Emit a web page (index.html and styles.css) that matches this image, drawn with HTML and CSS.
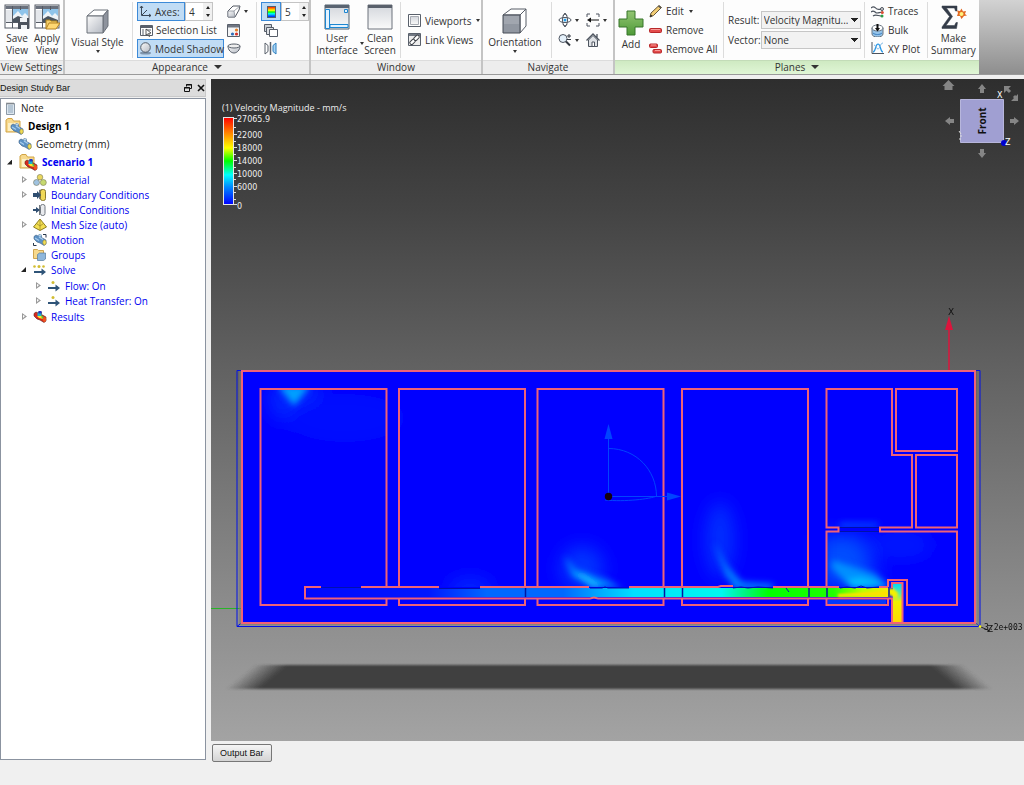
FILE: index.html
```html
<!DOCTYPE html>
<html lang="en">
<head>
<meta charset="utf-8">
<title>Design Study</title>
<link rel="stylesheet" href="styles.css">
</head>
<body>
<svg class="defs" width="0" height="0" aria-hidden="true">
  <defs>
    <linearGradient id="face" x1="0" y1="0" x2="1" y2="1"><stop offset="0" stop-color="#fafafa"/><stop offset="1" stop-color="#b4b9c2"/></linearGradient>
    <linearGradient id="pane" x1="0" y1="0" x2="0" y2="1"><stop offset="0" stop-color="#d3d6dc"/><stop offset="1" stop-color="#fafafa"/></linearGradient>
    <linearGradient id="green" x1="0" y1="0" x2="0" y2="1"><stop offset="0" stop-color="#93c573"/><stop offset="1" stop-color="#4e9a37"/></linearGradient>
    <linearGradient id="rainbow" x1="0" y1="0" x2="0" y2="1"><stop offset="0" stop-color="#f00"/><stop offset=".12" stop-color="#ff5a00"/><stop offset=".35" stop-color="#ff0"/><stop offset=".5" stop-color="#0f0"/><stop offset=".66" stop-color="#0ff"/><stop offset=".8" stop-color="#08f"/><stop offset="1" stop-color="#00f"/></linearGradient>
    <symbol id="i-view" viewBox="0 0 26 26"><rect x="1" y="1" width="24" height="23" fill="#fff" stroke="#555b65"/><path d="M1.500 2h23v3h-23z" fill="#6a717d"/><path d="M9 5h15v11H9z" fill="#8fc4ea"/><path d="M9 12l5-5 4 5 3-3 3 3v6H9z" fill="#eef3f7"/><path d="M9 15l5-3 10 4v3H9z" fill="#49545f"/><path d="M8.500 2v22M16.500 2v4M2 18.500h22" stroke="#555b65" fill="none"/><path d="M2 6h6v12H2z" fill="#e4e7eb"/></symbol>
    <symbol id="i-folder" viewBox="0 0 19 17"><path d="M1 14V2l2-1.500h4L8.500 3H15v11z" fill="#f7d98d" stroke="#d2a445"/><path d="M3 5h11v8H3z" fill="#fdf0c4"/></symbol>
    <symbol id="i-geo" viewBox="0 0 14 12"><path d="M1 5V2.500l2-1.500 2 1 1-1.500 2.500.5v2.500L13 6v4l-2 1.500-4-2.500-3-1z" fill="#5b91c4" stroke="#3f6288" stroke-width=".6"/><path d="M2 4l4 2.500M6 3l4 2.500" stroke="#a9cdec" stroke-width="1.300"/><ellipse cx="11.500" cy="8.500" rx="1.700" ry="2.400" fill="#f0dc57" stroke="#98852e" stroke-width=".5"/><ellipse cx="7" cy="1.500" rx="1.600" ry="1" fill="#b7d4ea"/></symbol>
    <symbol id="i-hot" viewBox="0 0 14 12"><path d="M1 5V2.500l2-1.500 2 1 1-1.500 2.500.5v2.500L13 6v4l-2 1.500-4-2.500-3-1z" fill="#d8281e" stroke="#5a221d" stroke-width=".6"/><path d="M4.500 1.500h4v3.500h-4z" fill="#19b4d0"/><path d="M5.500 0h3v2.500h-3z" fill="#2138c8"/><path d="M4 5h5l1 3-4-1z" fill="#ffe12b"/><path d="M8 4l3 2-2 2z" fill="#58c837"/><ellipse cx="11.500" cy="8.500" rx="1.700" ry="2.400" fill="#f0561f"/></symbol>
    <symbol id="i-step" viewBox="0 0 14 12"><path d="M1 8h9" stroke="#2f5478" stroke-width="2"/><path d="M8.500 4.500L13 8l-4.500 3.500z" fill="#2f5478"/><circle cx="6" cy="2.500" r="1.500" fill="#d2bd31"/></symbol>
  </defs>
</svg>

<header class="ribbon">
  <section class="panel panel-views">
    <div class="tools">
      <button class="big"><svg width="26" height="26"><use href="#i-view"/><path d="M14 14h11v11H14z" fill="#4c525c"/><path d="M16 14h7v4h-7zM17 21h6v4h-6z" fill="#f1f3f5"/></svg>Save<br>View</button>
      <button class="big"><svg width="26" height="26"><use href="#i-view"/><path d="M12 25V16h4l1 1h6v3" fill="#f3ce69" stroke="#a97d1d"/><path d="M12 25l3-6h11l-4 6z" fill="#ffd873" stroke="#b58222"/></svg>Apply<br>View</button>
    </div>
    <h2 class="caption">View Settings</h2>
  </section>

  <section class="panel panel-look">
    <div class="tools">
      <button class="big style-button"><svg width="26" height="26" viewBox="0 0 26 26"><path d="M2 8l7-6h14l-5 6z" fill="#fff" stroke="#6a7079"/><path d="M18 8l5-6v16l-5 7z" fill="#8e939d" stroke="#6a7079"/><path d="M2 8h16v17H2z" fill="url(#face)" stroke="#6a7079"/></svg>Visual Style<i class="caret"></i></button>
      <div class="stack ruled display">
        <div class="row"><button class="small toggle axes"><svg width="13" height="13" viewBox="0 0 13 13" fill="none" stroke="#3c4856"><path d="M2.500 1v9.500H12M3 10l5-5M1 3l1.500-2L4 3M10 9l2 1.500L10 12"/></svg>Axes:</button><span class="spin"><input value="4" aria-label="Axes size"><span><button aria-label="More"><i class="up"></i></button><button aria-label="Less"><i class="down"></i></button></span></span></div>
        <button class="small"><svg width="13" height="13" viewBox="0 0 13 13"><path d="M.5 1.500h12v10H.5z" fill="#fff" stroke="#59606b"/><path d="M1 2h11v2H1z" fill="#59606b"/><path d="M2 6h2M2 8h2M2 10h2M6 6h5" stroke="#59606b"/><path d="M6 5l5 4-2.500.5L10 12l-1 .5L7.500 10 6 11z" fill="#fff" stroke="#333" stroke-width=".8"/></svg>Selection List</button>
        <button class="small toggle"><svg width="13" height="13" viewBox="0 0 13 13"><ellipse cx="6.500" cy="11" rx="5.500" ry="1.500" fill="#7e95ad"/><circle cx="6.500" cy="5.500" r="4.800" fill="url(#face)" stroke="#515c69"/></svg>Model Shadow</button>
      </div>
      <div class="stack icons">
        <button class="small" aria-label="Clip"><svg width="14" height="13" viewBox="0 0 14 13"><path d="M1 6l5-5h7l-1 4-4 7H1z" fill="#fff" stroke="#515761"/><path d="M1 6h6l1 6H1z" fill="url(#face)" stroke="#7c828c" stroke-width=".7"/><path d="M7 6l6-5" fill="none" stroke="#7c828c" stroke-width=".7"/></svg><i class="caret"></i></button>
        <button class="small" aria-label="Materials"><svg width="14" height="13" viewBox="0 0 14 13"><path d="M.5.500h12v12H.5z" fill="#f4f5f6" stroke="#59606b"/><path d="M1 1h11v2.500H1z" fill="#707682"/><circle cx="9.500" cy="6" r="1.600" fill="#e57d24"/><circle cx="9.500" cy="10" r="1.600" fill="#d8322a"/><circle cx="5.500" cy="10" r="1.600" fill="#2e6eb8"/></svg></button>
        <button class="small" aria-label="Surface"><svg width="14" height="13" viewBox="0 0 14 13"><path d="M1 4c0 4 3 7 6 7s6-3 6-7z" fill="url(#face)" stroke="#59606b"/><ellipse cx="7" cy="4" rx="6" ry="2" fill="#eee" stroke="#59606b"/></svg></button>
      </div>
      <div class="stack ruled colours">
        <div class="row"><button class="toggle icon-only" aria-label="Colour legend"><svg width="9" height="12"><rect x=".5" y=".5" width="8" height="11" fill="url(#rainbow)" stroke="#506070"/></svg></button><span class="spin"><input value="5" aria-label="Legend levels"><span><button aria-label="More"><i class="up"></i></button><button aria-label="Less"><i class="down"></i></button></span></span></div>
        <button class="small" aria-label="Layers"><svg width="14" height="13" viewBox="0 0 14 13" stroke="#565d68"><path d="M.5.500h7v7h-7z" fill="#cbd0d6"/><path d="M2.500 3.500h7v7h-7z" fill="#dfe2e6"/><path d="M5.500 5.500h8v7h-8z" fill="#fff"/></svg></button>
        <button class="small" aria-label="Mirror"><svg width="14" height="13" viewBox="0 0 14 13"><path d="M1 1l3 2.500v6L1 12z" fill="#fff" stroke="#59606b"/><path d="M6.500 0v13" stroke="#59606b" stroke-width="1.500"/><path d="M12 1L9 3.500v6l3 2.500z" fill="#a8d4f5" stroke="#2e80c0"/></svg></button>
      </div>
    </div>
    <h2 class="caption">Appearance <i class="caret wide"></i></h2>
  </section>

  <section class="panel panel-window">
    <div class="tools">
      <button class="big ui-button"><svg width="26" height="26" viewBox="0 0 26 26"><path d="M1 1h24v24H1z" fill="url(#pane)" stroke="#51606e"/><path d="M1 1h24v3H1z" fill="#5a6471"/><path d="M1.500 5.500h4v19h-4zM6 20.500h18v3H6zM20.500 5.500h3v3h-3z" fill="#e3f3ff" stroke="#1c86d1"/></svg>User<br>Interface</button>
      <i class="caret side"></i>
      <button class="big clean-button"><svg width="26" height="26" viewBox="0 0 26 26"><path d="M1 1h24v24H1z" fill="url(#pane)" stroke="#6c727c"/><path d="M1 1h24v3H1z" fill="#59606b"/></svg>Clean<br>Screen</button>
      <div class="stack ruled pair">
        <button class="small"><svg width="13" height="13" viewBox="0 0 13 13"><path d="M.5.500h12v12H.5z" fill="#fff" stroke="#59606b"/><path d="M2.500 2.500h8v8h-8z" fill="url(#pane)" stroke="#a7abb2"/></svg>Viewports<i class="caret"></i></button>
        <button class="small"><svg width="13" height="13" viewBox="0 0 13 13"><path d="M.5.500h12v12H.5z" fill="#eee" stroke="#59606b"/><path d="M1 1h11v2H1z" fill="#727984"/><g fill="#fff" stroke="#3d4148"><rect x="-2.500" y="-1.500" width="6" height="3.500" rx="1.500" transform="translate(4 9) rotate(-45)"/><rect x="-2.500" y="-1.500" width="6" height="3.500" rx="1.500" transform="translate(8 5) rotate(-45)"/></g></svg>Link Views</button>
      </div>
    </div>
    <h2 class="caption">Window</h2>
  </section>

  <section class="panel panel-navigate">
    <div class="tools">
      <button class="big orient-button"><svg width="26" height="26" viewBox="0 0 26 26"><path d="M1 7l8-6h15l-6 6zM18 7l6-6v17l-6 7z" fill="#fff" stroke="#575d67"/><path d="M1 7h17v18H1z" fill="#9197a1" stroke="#474d56"/><path d="M2 8h15v8H2z" fill="#b2b6be" opacity=".5"/></svg>Orientation<i class="caret"></i></button>
      <div class="nav-grid ruled">
        <button class="small" aria-label="Orbit"><svg width="14" height="14" viewBox="0 0 14 14" fill="none" stroke="#4e5560"><ellipse cx="7" cy="7" rx="6" ry="2.500"/><ellipse cx="7" cy="7" rx="2.500" ry="6"/><path d="M5 3l2-3 2 3M5 11l2 3 2-3"/><circle cx="7" cy="7" r="1.500" fill="#269ce8" stroke="none"/></svg><i class="caret"></i></button>
        <button class="small" aria-label="Fit"><svg width="14" height="14" viewBox="0 0 14 14" fill="none" stroke="#4e5560"><path d="M1 4V1h3M10 1h3v3M13 10v3h-3M4 13H1v-3"/><path d="M3 7h10" stroke="#111"/><path d="M5 4.500L1 7l4 2.500z" fill="#111" stroke="none"/></svg><i class="caret"></i></button>
        <button class="small" aria-label="Zoom"><svg width="14" height="14" viewBox="0 0 14 14"><circle cx="5" cy="5.500" r="4" fill="#e5f1fb" stroke="#4e5560"/><path d="M8 8.500l4 4" stroke="#333942" stroke-width="2"/><path d="M9 3h4M11 1v4M9 6.500h4" stroke="#333942"/></svg><i class="caret"></i></button>
        <button class="small" aria-label="Home"><svg width="14" height="14" viewBox="0 0 14 14"><path d="M2.500 7v6.500h9V7L7 2.500z" fill="#dfe2e6" stroke="#4e5560"/><path d="M.5 7.500L7 1l6.500 6.500M11 1v4" fill="none" stroke="#4e5560" stroke-width="1.300"/><path d="M6 9h2.500v4.500H6z" fill="#fff" stroke="#4e5560"/></svg></button>
      </div>
    </div>
    <h2 class="caption">Navigate</h2>
  </section>

  <section class="panel panel-planes">
    <div class="tools">
      <button class="big add-button"><svg width="26" height="26" viewBox="0 0 26 26"><path d="M9 1h8v8h8v8h-8v8H9v-8H1V9h8z" fill="url(#green)" stroke="#36752b"/></svg>Add</button>
      <div class="stack edits">
        <button class="small"><svg width="13" height="13" viewBox="0 0 13 13"><path d="M1 12l1-4 8-7.500 2.500 2L4.500 10.500z" fill="#f3cd74" stroke="#65563a"/><path d="M1 12l.7-2.500L3.500 11z" fill="#222"/><path d="M9 1.500L10 .5l2.500 2-1 1z" fill="#555"/></svg>Edit<i class="caret"></i></button>
        <button class="small"><svg width="13" height="13" viewBox="0 0 13 13"><rect x=".5" y="4.500" width="12" height="4" rx="1" fill="#e34b4b" stroke="#b72729"/><path d="M2 5.500h9" stroke="#f79c98"/></svg>Remove</button>
        <button class="small"><svg width="13" height="13" viewBox="0 0 13 13"><g fill="#e34b4b" stroke="#b72729"><rect x=".5" y="2" width="8" height="3.500" rx="1"/><rect x="4" y="7.500" width="8.500" height="3.500" rx="1"/></g><path d="M2 3h5M6 8.500h5" stroke="#f79c98"/></svg>Remove All</button>
      </div>
      <div class="fields ruled">
        <label for="result">Result:</label><select id="result"><option>Velocity Magnitu...</option></select>
        <label for="vector">Vector:</label><select id="vector"><option>None</option></select>
      </div>
      <div class="stack ruled traces">
        <button class="small"><svg width="13" height="13" viewBox="0 0 13 13" fill="none" stroke="#4b525d"><path d="M0 3c3-3 4 0 6 1s3 0 5 0M0 7c3-3 4 1 6 1s3-1 6-1M2 11c3-2 5 0 8 0" stroke-width="1.200"/><circle cx="11" cy="4" r="1.500" fill="#ddd"/><circle cx="11.300" cy="7.500" r="1.500" fill="#db4c32" stroke="none"/><circle cx="11" cy="11" r="1.500" fill="#2e9b48" stroke="none"/></svg>Traces</button>
        <button class="small"><svg width="13" height="13" viewBox="0 0 13 13"><path d="M1 4v6c0 4 11 4 11 0V4z" fill="#95c4ea" stroke="#687480"/><ellipse cx="6.500" cy="4" rx="5.500" ry="3" fill="#fff" stroke="#687480"/><path d="M5.500 0h2v4H9L6.500 7.500 4 4h1.500z" fill="#111"/><path d="M2 9c2 2 7 2 9 0" stroke="#3b7ec0" fill="none"/></svg>Bulk</button>
        <button class="small"><svg width="13" height="13" viewBox="0 0 13 13" fill="none"><path d="M1 0v11.500H13" stroke="#4b525d"/><path d="M2 10c3 0 2-8 5-8s2 8 5 8" stroke="#2595e6" stroke-width="1.200"/><path d="M3 3c2 0 2 4 4 4s2-6 5-6" stroke="#7fb9e6"/></svg>XY Plot</button>
      </div>
      <button class="big ruled sum-button"><svg width="26" height="26" viewBox="0 0 26 26"><path d="M1 2h15v5h-1.500l-1-3H5.500l6 8.500L5 21.500h8.500l1.500-3h1.500l-1 6H1V23l7.500-10.500L1 3.500z" fill="#343c49" stroke="#343c49" stroke-width=".5"/><path d="M20.500 4.500l1.500 3 3-.5-1 3 2 1.500-3 .5-2.500 3-1.500-3-3 0 1-3-1-2.500 3 .5z" fill="#e26a23"/><circle cx="20.500" cy="10" r="2" fill="#fff27d"/></svg>Make<br>Summary</button>
    </div>
    <h2 class="caption">Planes <i class="caret wide"></i></h2>
  </section>
  <div class="ribbon-rest"></div>
</header>

<main class="workspace">
  <aside class="study">
    <div class="study-head"><h1>Design Study Bar</h1>
      <button aria-label="Float"><svg width="8" height="8" viewBox="0 0 8 8" fill="none" stroke="#111"><path d="M2.500 2.500v-2h5v4h-2M2 1h6" /><path d="M.5 3.500h5v4h-5zM0 4h6"/></svg></button>
      <button aria-label="Close"><svg width="8" height="8" viewBox="0 0 8 8"><path d="M1 1l6 6M7 1L1 7" stroke="#111" stroke-width="1.600"/></svg></button>
    </div>
    <ul class="tree">
      <li class="tall note"><svg width="12" height="13" viewBox="0 0 12 13"><path d="M1.500 1.500h8v11h-8z" fill="#dce6ef" stroke="#8c99a6"/><path d="M3 4h5M3 6h5M3 8h5M3 10h5" stroke="#8fa6ba"/><path d="M2 .5v2M4 .5v2M6 .5v2M8 .5v2" stroke="#777"/></svg>Note</li>
      <li class="tall top"><svg width="19" height="17"><use href="#i-folder"/><use href="#i-geo" x="5" y="5" width="14" height="12"/></svg><b>Design 1</b></li>
      <li class="tall geometry"><svg width="14" height="12"><use href="#i-geo"/></svg>Geometry (mm)</li>
      <li class="tall scenario"><i class="open"></i><svg width="19" height="17"><use href="#i-folder"/><use href="#i-hot" x="5" y="5" width="14" height="12"/></svg><a href="#scenario"><b>Scenario 1</b></a></li>
      <li class="branch">
        <ul id="scenario">
          <li><i class="shut"></i><svg width="14" height="12" viewBox="0 0 14 12" stroke="#7a7a5a" stroke-width=".6"><circle cx="7" cy="3.200" r="2.800" fill="#e9d75e"/><circle cx="3.500" cy="8.500" r="3" fill="#9fc2e0"/><circle cx="10.300" cy="8.500" r="3" fill="#c6d96f"/></svg><a href="#material">Material</a></li>
          <li><i class="shut"></i><svg width="14" height="12" viewBox="0 0 14 12"><path d="M6 1l4-1v11l-4-1z" fill="#6f757c"/><rect x="7.500" y=".5" width="5" height="11" rx="2" fill="#f0d957" stroke="#8b7a2d"/><path d="M0 4h4V2l4 4-4 4V8H0z" fill="#2f4e70"/></svg><a href="#boundary">Boundary Conditions</a></li>
          <li><i></i><svg width="14" height="12" viewBox="0 0 14 12"><rect x="7.500" y=".5" width="4.500" height="11" rx="2" fill="#e9ebee" stroke="#737980"/><path d="M6.500 1v10" stroke="#737980"/><path d="M0 5h3V3l4 3-4 3V7H0z" fill="#2f4e70"/></svg><a href="#initial">Initial Conditions</a></li>
          <li><i class="shut"></i><svg width="14" height="12" viewBox="0 0 14 12"><path d="M7 0l6.500 8L7 11.500.5 8z" fill="#f3df51" stroke="#8b7b22"/><path d="M7 0v11M3.500 4.500L7 7l3.500-2.500" stroke="#a18d2a" fill="none" stroke-width=".8"/></svg><a href="#mesh">Mesh Size (auto)</a></li>
          <li><i></i><svg width="14" height="12"><use href="#i-geo"/><path d="M10 .5h3v3M.5 9v2.500h3" stroke="#26374a" fill="none"/></svg><a href="#motion">Motion</a></li>
          <li><i></i><svg width="14" height="12" viewBox="0 0 14 12"><path d="M.5 9.500v-9h4l1 1h5v8z" fill="#f7d98d" stroke="#cfa550"/><path d="M4.500 5.500l2-1.500h6v6l-2 1.500h-6z" fill="#8fb7db" stroke="#557c9f" stroke-width=".7"/></svg><a href="#groups">Groups</a></li>
          <li><i class="open"></i><svg width="14" height="12"><use href="#i-step"/><circle cx="1.500" cy="2.500" r="1.300" fill="#d2bd31"/><circle cx="10.500" cy="2.500" r="1.300" fill="#d2bd31"/></svg><a href="#solve">Solve</a></li>
          <li class="branch">
            <ul id="solve">
              <li><i class="shut"></i><svg width="14" height="12"><use href="#i-step"/></svg><a href="#flow">Flow: On</a></li>
              <li><i class="shut"></i><svg width="14" height="12"><use href="#i-step"/></svg><a href="#heat">Heat Transfer: On</a></li>
            </ul>
          </li>
          <li><i class="shut"></i><svg width="14" height="12"><use href="#i-hot"/></svg><a href="#results">Results</a></li>
        </ul>
      </li>
    </ul>
  </aside>

  <section class="view">
    <div class="stage">
      <svg class="scene" viewBox="211 79 813 662" preserveAspectRatio="xMinYMin meet" role="img" aria-label="Velocity plot of the floor plan">
        <defs>
          <linearGradient id="flow" gradientUnits="userSpaceOnUse" x1="305" y1="0" x2="892" y2="0">
            <stop offset="0" stop-color="#0008ff"/><stop offset=".21" stop-color="#0018ff"/><stop offset=".31" stop-color="#0068ff"/><stop offset=".44" stop-color="#0068ff"/><stop offset=".5" stop-color="#00a8ff"/><stop offset=".56" stop-color="#00e0ff"/><stop offset=".71" stop-color="#00f8f0"/><stop offset=".75" stop-color="#00f480"/><stop offset=".79" stop-color="#00ff00"/><stop offset=".9" stop-color="#20ff00"/><stop offset=".95" stop-color="#b8ff00"/><stop offset="1" stop-color="#ffe800"/>
          </linearGradient>
          <linearGradient id="drop" x1="0" y1="0" x2="0" y2="1"><stop offset="0" stop-color="#00d8f8"/><stop offset=".25" stop-color="#60e8a0"/><stop offset=".45" stop-color="#f0f000"/><stop offset="1" stop-color="#ffd800"/></linearGradient>
          <linearGradient id="shade-left" gradientUnits="userSpaceOnUse" x1="225" y1="689" x2="239" y2="706"><stop offset="0" stop-color="#404040" stop-opacity="0"/><stop offset="1" stop-color="#404040"/></linearGradient>
          <linearGradient id="shade-right" gradientUnits="userSpaceOnUse" x1="993" y1="689" x2="979" y2="706"><stop offset="0" stop-color="#404040" stop-opacity="0"/><stop offset="1" stop-color="#404040"/></linearGradient>
          <filter id="soft1" x="-20%" y="-20%" width="140%" height="140%"><feGaussianBlur stdDeviation="1"/></filter>
          <filter id="soft3" x="-50%" y="-50%" width="200%" height="200%"><feGaussianBlur stdDeviation="3"/></filter>
          <filter id="soft8" x="-80%" y="-80%" width="260%" height="260%"><feGaussianBlur stdDeviation="9"/></filter>
          <clipPath id="rooms"><path d="M261 389h126v198h-126zM399 389h126v198h-126zM537 389h126v198h-126zM682 389h126v198h-126zM827 455h85v72h-85zM827 532h130v55h-130z"/></clipPath>
        </defs>
        <g filter="url(#soft1)"><path d="M223 689L253 665H610V689z" fill="url(#shade-left)"/><path d="M995 689L965 665H608V689z" fill="url(#shade-right)"/></g>
        <path d="M211 608.500h30" stroke="#28b428"/>
        <path d="M237 370.500h743v256h-743zM237 626.500l5-4M980 626.500l-5-4" fill="none" stroke="#0010e8"/>
        <path d="M240 371v253h738v-253" fill="none" stroke="#777"/>
        <path d="M242 371h733v252h-733z" fill="#00f"/>
        <g clip-path="url(#rooms)">
          <g filter="url(#soft8)">
            <ellipse cx="295" cy="400" rx="26" ry="24" fill="#0038ff" opacity=".7"/>
            <ellipse cx="345" cy="418" rx="60" ry="24" fill="#000cff"/>
            <ellipse cx="470" cy="590" rx="22" ry="12" fill="#0028ff"/>
            <ellipse cx="582" cy="568" rx="22" ry="22" fill="#0048ff" opacity=".7"/>
            <ellipse cx="720" cy="540" rx="14" ry="38" fill="#0044ff" opacity=".7"/>
            <path d="M820 535h40l20 52h-60z" fill="#0060ff" opacity=".8"/>
            <ellipse cx="900" cy="545" rx="32" ry="12" fill="#001cff"/>
          </g>
          <g filter="url(#soft3)">
            <path d="M278 386h32l-16 20z" fill="#00a0ff"/>
            <path d="M564 556l14 15 28 8 16 9h-24l-26-12z" fill="#0078ff"/>
            <path d="M572 573l12 0 20 15h-12z" fill="#10b8ff"/>
            <path d="M714 542l12 22 18 20v5l-18-11z" fill="#0078ff"/>
            <path d="M729 576l14 6 30 2v5h-40z" fill="#0080ff"/>
            <path d="M832 560l43 14 14 12h-40l-17-18z" fill="#0090ff"/>
            <path d="M846 580l16-2 27 9-36 1z" fill="#00c0ff"/>
            <path d="M840 523h38v4h-38z" fill="#0050ff"/>
          </g>
        </g>
        <path d="M307 588h583v9h-583z" fill="url(#flow)"/>
        <path d="M838 594l52-3v4l-52 2z" fill="#ffe000" filter="url(#soft1)"/>
        <path d="M893 584h9v39h-9z" fill="url(#drop)"/>
        <path d="M885 590l8-2 5 5-1 6-6-3z" fill="#f4f000" filter="url(#soft1)"/>
        <path d="M525.500 588v9M664.500 588v9M682.500 588v9M809 588v9M827 588v9M889 588v9" stroke="#0018a0" stroke-width="1.500"/>
        <path d="M321 587.500h40M439 588.500h41M590 588h12l3-1 3 1h21M733 588l8-1 7 1 10-1 15 1M786 588l3 4M840 588l7-1 8 1 6-2 6 2 12-1" fill="none" stroke="#0010b0"/>
        <path d="M838 527.500h42M838 531.500h42" stroke="#0010a8"/>
        <path d="M828 601h58M828 603h58" stroke="#0070ff"/>
        <g class="walls">
          <path d="M242 371h733v252h-733z"/>
          <path d="M386.500 587V389H260.500v216h126v-7M399 587V389h126v198M399 598v7h126v-7M537.500 587V389h126v198M537.500 598v7h126v-7M682 587V389h126v198M682 598v7h126v-7"/>
          <path d="M826.500 587v-55.500h12v-4h-12V389h65.500v66h20v72.500h-32v4h77v73.500h-50v-25h-19v7M888 598v7h-61.500v-7"/>
          <path d="M896 389h61v62h-61zM916 455h41v72.500h-41z"/>
          <path d="M321 587h-16v11.500h285l4-1 4 1h294V623M361 587h78M480 587h109M629 587h89l3-1h12M773 587h66M879 587h9M892 588v-5h10.500v40"/>
        </g>
        <g fill="none" stroke="#0044ff">
          <path d="M608.500 497v-60M608.500 448.500c28 0 48 22 48 48M612 496.500h56M605 500c20 2 45-1 52-4"/>
          <path d="M608.500 424l-4 15h8zM681 496.500l-14-4v8z" fill="#0044ff" stroke="none"/>
        </g>
        <circle cx="608.500" cy="496.500" r="3.700" fill="#160010"/>
        <path d="M949 370v-45" stroke="#dc143c" stroke-width="1.500"/>
        <path d="M949 316l-4 14h8z" fill="#dc143c"/>
        <text class="axis" x="948" y="315">X</text>
        <path d="M981 627l9 4" stroke="#222"/>
        <text class="axis value" x="984" y="630">3.2e+003</text><text class="axis" x="987" y="632">Z</text>
        <circle cx="980" cy="626.500" r="1.300" fill="#ff0"/>
      </svg>
      <svg class="legend" width="140" height="110" viewBox="0 0 140 110">
        <text class="legend-title" x="0" y="10">(1) Velocity Magnitude - mm/s</text>
        <rect x="1.500" y="16.500" width="10" height="87" fill="url(#rainbow)" stroke="#e5e5e5"/>
        <path d="M12 17.500h3M12 26.500h2M12 33.500h3M12 40.500h2M12 46.500h3M12 53.500h2M12 59.500h3M12 66.500h2M12 72.500h3M12 78.500h2M12 85.500h3M12 91.500h2M12 98.500h2M12 103.500h3" stroke="#ddd"/>
        <text x="15" y="21">27065.9</text><text x="15" y="37">22000</text><text x="15" y="50">18000</text><text x="15" y="63">14000</text><text x="15" y="76">10000</text><text x="15" y="89">6000</text><text x="15" y="108">0</text>
      </svg>
      <svg class="cube" width="84" height="84" viewBox="940 79 84 84">
        <g fill="#858585"><path id="arrow" d="M982 84l-4 5h2v4h4v-4h2z"/><use href="#arrow" transform="rotate(90 982 121)"/><use href="#arrow" transform="rotate(180 982 121)"/><use href="#arrow" transform="rotate(270 982 121)"/><path d="M948.500 80l-6 6h2v4h8v-4h2z"/></g>
        <path d="M1007 89l3 3M1014 96l2 2" stroke="#858585" stroke-width="3"/><path d="M1004 86h7l-7 7zM1018 94v7h-7z" fill="#858585"/>
        <path d="M960.500 99.500h43v43h-43z" fill="#a09fd2" stroke="#b7b6dc"/>
        <text class="face" transform="translate(986 121) rotate(-90)">Front</text>
        <circle cx="1004" cy="143" r="3" fill="#0000d0"/>
        <text class="cube-axis" x="997" y="98">X</text><text class="cube-axis" x="1005" y="145">Z</text><path d="M959 131l2 3M960 136h2M959 139h2" stroke="#ddd" fill="none"/>
      </svg>
    </div>
    <footer class="dock"><button class="output">Output Bar</button></footer>
  </section>
</main>
</body>
</html>
```
FILE: styles.css
```css
* { box-sizing: border-box; }
body {
  margin: 0;
  min-height: 100vh;
  display: flex;
  flex-direction: column;
  background: #f0f0f0;
  color: #333;
  font: 10px/12px "Open Sans", "Noto Sans", sans-serif;
}
button, input, select { font: inherit; color: inherit; margin: 0; padding: 0; border: 0; background: none; }
h1, h2, ul { margin: 0; padding: 0; font-size: inherit; font-weight: normal; list-style: none; }
svg { flex: none; display: block; }
.defs { position: absolute; }

.ribbon { display: flex; border-bottom: 1px solid #9a9a9a; margin-bottom: 4px; overflow: hidden; background: #fdfdfd; }
.panel { flex: none; display: flex; flex-direction: column; border-right: 2px solid #c4c4c4; }
.panel-views { width: 65px; }
.panel-look { width: 246px; }
.panel-window { width: 172px; }
.panel-navigate { width: 132px; }
.panel-planes { width: 364px; border-right: 0; }
.ribbon-rest { flex: 1; background: linear-gradient(#d2d2d2, #8e8e8e); }
.tools { display: flex; height: 60px; padding: 2px 0; }
.tools > * { flex: none; }
.caption {
  display: flex; align-items: center; justify-content: center; gap: 6px;
  height: 14px; padding-bottom: 2px; background: #ededed; border-top: 1px solid #dcdcdc; white-space: nowrap;
}
.panel-planes .caption { background: linear-gradient(#cfeac2, #e0f6d6); border-color: #c3dcb8; }

.big { display: block; text-align: center; line-height: 12px; white-space: nowrap; }
.big svg { margin: 0 auto 2px; }
.panel-views .tools { padding-left: 2px; }
.panel-views .big { width: 30px; }
.style-button { width: 67px; padding-right: 2px; }
.ui-button { width: 46px; margin-left: 3px; }
.side { margin: 40px 0 0; }
.clean-button { width: 32px; }
.orient-button { width: 68px; padding-right: 4px; }
.add-button { width: 34px; padding-right: 2px; }
.tools > .sum-button { flex: 1; }
.ruled { border-left: 1px solid #dcdcdc; }

.caret { flex: none; width: 0; height: 0; border: 2px solid transparent; border-top: 3px solid #333; border-bottom: 0; }
.caret.wide { border-width: 4px 4px 0; }
.big .caret { display: block; margin: 2px auto 0; }

.stack { display: flex; flex-direction: column; padding: 0 4px; }
.row { display: flex; }
.small { display: flex; align-items: center; height: 19px; padding: 0 3px; gap: 4px; white-space: nowrap; }
.small .caret { margin-left: 1px; }
.toggle { border: 1px solid #3c8ad8; background: #c0dcf5; padding: 0 1px; }
.display { width: 95px; padding-right: 3px; }
.display .small { gap: 3px; }
.axes { width: 48px; }
.icon-only { width: 20px; display: grid; place-items: center; }
.icons { padding: 0; width: 29px; }
.icons .small { padding: 0; gap: 2px; }
.colours .small { gap: 2px; }
.colours { padding-right: 0; }
.pair { justify-content: center; margin-left: 4px; padding-right: 0; }
.pair .small { padding-right: 0; }
.edits { padding: 0; width: 74px; }
.edits .small { padding: 0; }
.traces { padding: 0 0 0 3px; width: 63px; }
.spin { display: flex; width: 28px; height: 19px; border: 1px solid #c4c4c4; background: #fff; }
.spin input { width: 17px; padding-left: 3px; min-width: 0; }
.spin > span { flex: 1; display: grid; }
.spin button { display: grid; place-items: center; background: #f0f0f0; }
.up, .down { border: 2px solid transparent; }
.up { border-bottom: 3px solid #222; border-top: 0; }
.down { border-top: 3px solid #222; border-bottom: 0; }
.nav-grid { display: grid; grid-template-columns: 28px 28px; align-content: center; padding-left: 3px; }
.nav-grid .small { gap: 2px; height: 20px; }
.fields {
  display: grid; grid-template-columns: 1fr 100px; align-content: center;
  width: 141px; row-gap: 2px; padding: 0 5px 0 4px;
}
.fields label { align-self: center; }
.fields select {
  height: 18px; padding: 0 12px 0 2px; border: 1px solid #c6c6c6; appearance: none; border-radius: 0;
  background-color: #f2f2f2;
  background-image: linear-gradient(to bottom left, #222 50%, transparent 50%), linear-gradient(to bottom right, #222 50%, transparent 50%);
  background-repeat: no-repeat;
  background-size: 4px 4px;
  background-position: right 5px center, right 1px center;
}

.workspace { flex: 1; display: flex; min-height: 0; }
.study { flex: none; width: 206px; display: flex; flex-direction: column; padding-bottom: 25px; }
.study-head { display: flex; align-items: center; gap: 5px; height: 18px; background: #dcdcdc; border: 1px solid #c9c9c9; border-left: 0; margin-bottom: 1px; }
.study-head h1 { flex: 1; font: 9px/12px "Liberation Sans", sans-serif; color: #111; }
.tree { flex: 1; background: #fff; }
.study > .tree { border: 1px solid #8b93a0; padding-left: 4px; }
.tree li { display: flex; align-items: center; height: 15px; gap: 4px; color: #222; white-space: nowrap; }
.tree li.tall { height: 18px; }
.tree li.branch { display: block; height: auto; padding: 1px 0 1px 14px; }
.tree b { color: #000; }
.tree a { color: #0000f0; text-decoration: none; }
.tree a b { color: #0000f0; }
.tree .geometry { padding-left: 13px; }
.tree i { flex: none; width: 10px; height: 7px; }
.tree i.shut::before { content: ""; display: block; width: 5px; height: 7px; margin-left: 3px; background: #999; clip-path: polygon(0 0, 100% 50%, 0 100%, 0 0, 1px 2px, 1px 5px, 3px 3px, 1px 2px); }
.tree i.open::before { content: ""; display: block; width: 5px; height: 5px; margin: 1px 0 0 2px; background: #222; clip-path: polygon(100% 0, 100% 100%, 0 100%); }

.view { flex: 1; display: flex; flex-direction: column; min-width: 0; margin-left: 5px; }
.stage { position: relative; flex: 1; min-height: 0; overflow: hidden; background: linear-gradient(#2e2e2e, #444 20%, #626262 44%, #8f8f8f 82%, #a3a3a3); }
.scene { position: absolute; inset: 0; width: 100%; height: 100%; }
.walls { fill: none; stroke: #ef6277; stroke-width: 2; }
.axis { font: 9px "DejaVu Sans", sans-serif; fill: #111; }
.axis.value { font: 8px "DejaVu Sans Mono", monospace; }
.legend { position: absolute; left: 11px; top: 22px; fill: #eee; font: 8px "DejaVu Sans", sans-serif; }
.legend-title { font: 9px "Open Sans", sans-serif; }
.cube { position: absolute; top: 0; right: 0; }
.face { font: bold 10px "Open Sans", sans-serif; text-anchor: middle; fill: #111; }
.cube-axis { font: 8px "DejaVu Sans", sans-serif; fill: #fff; }
.dock { height: 44px; padding: 3px 1px; }
.output { display: block; height: 18px; padding: 0 7px; border: 1px solid #777; border-radius: 2px; background: linear-gradient(#f5f5f5, #d4d4d4); color: #111; font: 9px/12px "Liberation Sans", sans-serif; }
```
